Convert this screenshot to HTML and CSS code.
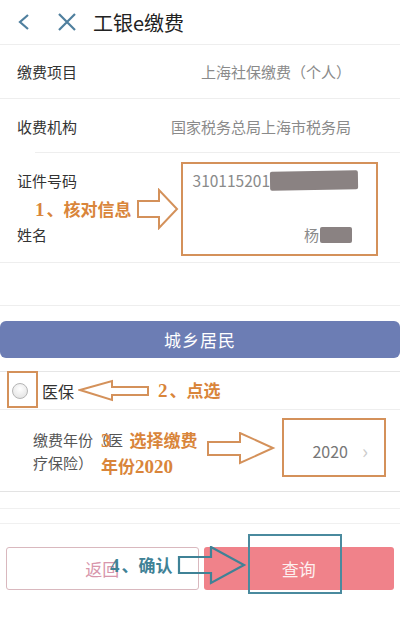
FILE: index.html
```html
<!DOCTYPE html>
<html lang="zh-CN">
<head>
  <meta charset="utf-8">
  <meta name="viewport" content="width=device-width, initial-scale=1.0" />
  <title>工银e缴费</title>
  <link rel="stylesheet" href="styles.css">
</head>
<body>
  <div class="page">

    <header class="topbar">
      <svg class="icon-back" width="14" height="18" viewBox="0 0 14 18">
        <path d="M11 2 L3 9 L11 16" fill="none" stroke="#4f7f9e" stroke-width="2.2" />
      </svg>
      <svg class="icon-close" width="20" height="18" viewBox="0 0 20 18">
        <path d="M2 1 L18 17 M18 1 L2 17" fill="none" stroke="#4f7f9e" stroke-width="2.2" />
      </svg>
      <h1 class="title">工银e缴费</h1>
    </header>

    <div class="row">
      <span class="label">缴费项目</span>
      <span class="value">上海社保缴费（个人）</span>
    </div>
    <div class="row row-indent">
      <span class="label">收费机构</span>
      <span class="value">国家税务总局上海市税务局</span>
    </div>
    <div class="row id-row">
      <div class="sub sub-top">
        <span class="label">证件号码</span>
        <span class="value id-value">310115201<i class="mask mask-id"></i></span>
      </div>
      <div class="sub">
        <span class="label">姓名</span>
        <span class="value name-value">杨<i class="mask mask-name"></i></span>
      </div>
    </div>
    <div class="row empty-row"></div>

    <div class="band">城乡居民</div>

    <div class="row radio-row">
      <span class="radio"></span>
      <span class="radio-label">医保</span>
    </div>

    <div class="row year-row">
      <span class="year-label">缴费年份（医疗保险）</span>
      <span class="year-value">2020 <b class="chev">&#8250;</b></span>
    </div>
    <div class="thin-line"></div>
    <div class="thin-line short"></div>

    <div class="actions">
      <button class="btn btn-back">返回</button>
      <button class="btn btn-query">查询</button>
    </div>

    <!-- annotations on top of the screenshot -->
    <div class="note-box box-info"></div>
    <div class="note note-1"><em>1</em>、核对信息</div>
    <svg class="arrow arrow-1" width="42" height="42" viewBox="0 0 42 42">
      <polygon points="1,13 22,13 22,2 40,21 22,40 22,29 1,29" fill="none" stroke="#d4915a" stroke-width="2" />
    </svg>

    <div class="note-box box-radio"></div>
    <svg class="arrow arrow-2" width="72" height="24" viewBox="0 0 72 24">
      <polygon points="2,11 34,2 34,8 70,8 70,16 34,16 34,21" fill="none" stroke="#d4915a" stroke-width="2" />
    </svg>
    <div class="note note-2"><em>2</em>、点选</div>

    <div class="note note-3a"><em>3</em><span class="dim">、</span>选择缴费</div>
    <div class="note note-3b">年份<em>2020</em></div>
    <svg class="arrow arrow-3" width="70" height="34" viewBox="0 0 70 34">
      <polygon points="2,10 34,10 34,1 67,16 34,31 34,23 2,23" fill="none" stroke="#d4915a" stroke-width="2" />
    </svg>
    <div class="note-box box-year"></div>

    <div class="note note-4"><em>4</em>、确认</div>
    <svg class="arrow arrow-4" width="70" height="40" viewBox="0 0 70 40">
      <polygon points="2,11 34,11 34,1 67,19 34,37 34,27 2,27" fill="none" stroke="#3f8296" stroke-width="2.2" />
    </svg>
    <div class="note-box box-confirm"></div>

  </div>
</body>
</html>
```

FILE: styles.css
```css
* {
  padding: 0;
  margin: 0;
  box-sizing: border-box;
}

body {
  background: #ffffff;
  font-family: "Noto Sans CJK SC", "Noto Sans", sans-serif;
  color: #333333;
}

.page {
  position: relative;
  width: 400px;
  height: 622px;
  overflow: hidden;
}

.topbar {
  height: 45px;
  border-bottom: 1px solid #eeeeee;
  display: flex;
  align-items: center;
  padding-left: 17px;
}

.icon-back {
  margin-right: 26px;
}

.icon-close {
  margin-right: 16px;
}

.title {
  font-size: 20px;
  font-weight: 400;
  color: #222222;
}

.row {
  display: flex;
  align-items: center;
  justify-content: space-between;
  height: 54px;
  padding: 0 49px 0 17px;
  border-bottom: 1px solid #eeeeee;
  font-size: 15px;
}

.row-indent {
  border-bottom: none;
  background: linear-gradient(#eeeeee, #eeeeee) 35px 100% / 365px 1px no-repeat;
}

.label {
  color: #333333;
}

.value {
  color: #8a8a8a;
}

.id-row {
  display: block;
  height: 110px;
  padding: 0;
}

.sub {
  display: flex;
  align-items: center;
  justify-content: space-between;
  height: 55px;
  padding: 0 48px 0 17px;
}

.sub-top {
  height: 54px;
  padding-right: 42px;
}

.id-value {
  font-size: 15.5px;
  display: flex;
  align-items: center;
}

.name-value {
  display: flex;
  align-items: center;
}

.mask {
  display: inline-block;
  background: #8a8282;
  border-radius: 2px;
}

.mask-id {
  width: 88px;
  height: 19px;
  transform: rotate(-1deg);
}

.mask-name {
  width: 32px;
  height: 16px;
  margin-left: 1px;
}

.empty-row {
  height: 43px;
}

.band {
  margin-top: 15px;
  height: 37px;
  border-radius: 6px;
  background: #6c7db4;
  color: #ffffff;
  font-size: 17px;
  text-align: center;
  line-height: 37px;
  letter-spacing: 1px;
}

.radio-row {
  margin-top: 13px;
  border-top: 1px solid #e6e6e6;
  height: 39px;
  justify-content: flex-start;
  padding-left: 12px;
}

.radio {
  width: 16px;
  height: 16px;
  border-radius: 50%;
  border: 1px solid #b5b5b5;
  background: radial-gradient(circle at 50% 35%, #ffffff, #dedede);
  margin-right: 14px;
}

.radio-label {
  font-size: 16px;
  color: #333333;
}

.year-row {
  height: 82px;
  padding: 0 32px 0 33px;
  border-bottom: 1px solid #e3e3e3;
}

.year-label {
  width: 94px;
  line-height: 23px;
  color: #555555;
  margin-top: 1px;
}

.year-value {
  color: #777777;
  font-size: 16px;
  display: flex;
  align-items: center;
}

.chev {
  font-weight: 400;
  color: #cccccc;
  font-size: 20px;
  margin-left: 14px;
}

.thin-line {
  height: 17px;
  border-bottom: 1px solid #f0f0f0;
}

.thin-line.short {
  height: 15px;
}

.actions {
  display: flex;
  gap: 5px;
  padding: 0 6px;
  margin-top: 23px;
}

.btn {
  flex: 1;
  height: 43px;
  border-radius: 3px;
  font-family: "Noto Sans CJK SC", sans-serif;
  font-size: 17px;
}

.btn-back {
  background: #ffffff;
  border: 1px solid #d9b8be;
  color: #d896ab;
}

.btn-query {
  background: #f0828a;
  border: none;
  color: #fdf0f0;
}

/* annotations */

.note-box {
  position: absolute;
  border: 2px solid #d4915a;
}

.box-info {
  left: 181px;
  top: 162px;
  width: 197px;
  height: 94px;
}

.box-radio {
  left: 7px;
  top: 371px;
  width: 31px;
  height: 37px;
}

.box-year {
  left: 282px;
  top: 418px;
  width: 104px;
  height: 59px;
}

.box-confirm {
  left: 248px;
  top: 534px;
  width: 94px;
  height: 60px;
  border-color: #4a8a9e;
}

.note {
  position: absolute;
  font-size: 17px;
  font-weight: 700;
  color: #d9853a;
  white-space: nowrap;
  line-height: 20px;
}

.note em {
  font-style: normal;
  font-family: "Liberation Serif", serif;
  font-size: 19px;
  margin-right: 2px;
}

.note .dim {
  opacity: 0;
}

.note-1 {
  left: 35px;
  top: 199px;
}

.note-2 {
  left: 158px;
  top: 380px;
}

.note-3a {
  left: 101px;
  top: 430px;
}

.note-3b {
  left: 101px;
  top: 456px;
}

.note-4 {
  left: 110px;
  top: 555px;
  color: #3f8296;
}

.arrow {
  position: absolute;
}

.arrow-1 {
  left: 137px;
  top: 188px;
}

.arrow-2 {
  left: 78px;
  top: 379px;
}

.arrow-3 {
  left: 206px;
  top: 432px;
}

.arrow-4 {
  left: 177px;
  top: 546px;
}
```
